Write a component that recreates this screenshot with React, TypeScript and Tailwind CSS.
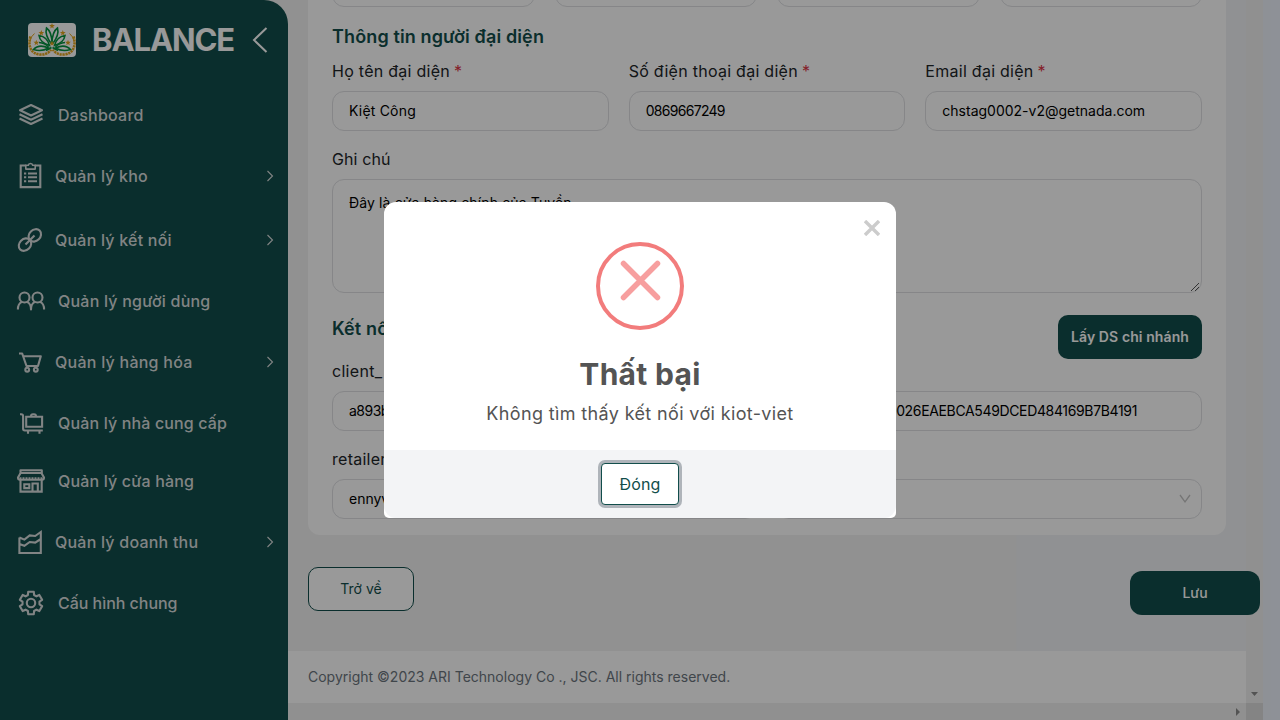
import type { ReactNode } from 'react';

function Icon({ children }: { children: ReactNode }) {
  return (
    <svg
      className="h-[30px] w-[30px] shrink-0"
      viewBox="0 0 30 30"
      fill="none"
      stroke="currentColor"
      strokeWidth="2.1"
      strokeLinejoin="round"
    >
      {children}
    </svg>
  );
}

const gearPoints = Array.from({ length: 6 })
  .flatMap((_, i) =>
    [
      [-21, 8.6],
      [-14, 11.6],
      [14, 11.6],
      [21, 8.6],
    ].map(([offset, r]) => {
      const a = ((i * 60 - 90 + offset) * Math.PI) / 180;
      return `${(15 + r * Math.cos(a)).toFixed(2)},${(15 + r * Math.sin(a)).toFixed(2)}`;
    }),
  )
  .join(' ');

const layers = (
  <Icon>
    <path d="M15 5 26 10.2 15 15.5 4 10.2ZM3.5 14.2 15 19.7l11.5-5.5M3.5 18.5 15 24l11.5-5.5" />
  </Icon>
);
const clipboard = (
  <Icon>
    <path strokeLinejoin="miter" d="M11 4.5H5.7v21.6h19.6V4.5H20" />
    <path d="M10.8 4.3h2.5q.2-1.8 2.2-1.8t2.2 1.8h2.5v3.8h-9.4Z" strokeWidth="1.6" />
    <path d="M9 12.5h2.2M13 12.5h9M9 16.3h2.2M13 16.3h9M9 20.2h2.2M13 20.2h9" />
  </Icon>
);
const link = (
  <Icon>
    <ellipse cx="19.8" cy="10.4" rx="6.8" ry="5.6" transform="rotate(-45 19.8 10.4)" />
    <ellipse cx="10" cy="19.6" rx="6.8" ry="5.6" transform="rotate(-45 10 19.6)" />
    <path d="m10.5 19.5 9-9" />
  </Icon>
);
const users = (
  <Icon>
    <circle cx="8.5" cy="11.5" r="5" />
    <circle cx="21.5" cy="11.5" r="5" />
    <path d="M1.9 23.5c0-4 1.4-6.5 4-7.600M11 15.900c2.600 1.100 4 3.600 4 7.600 0-4 1.400-6.500 4-7.600M24.100 15.900c2.600 1.100 4 3.600 4 7.600" />
  </Icon>
);
const cart = (
  <Icon>
    <path d="M4 6.5h3.2L11.5 19H23l2.8-9.7H8.2" />
    <circle cx="12.2" cy="22.7" r="1.9" />
    <circle cx="20.8" cy="22.7" r="1.9" />
  </Icon>
);
const luggage = (
  <Icon>
    <path d="M4 6.3h1.2q1.9 0 1.9 1.9v12.6q0 1.7 1.7 1.7h18" />
    <path d="M10.2 8.7h15.900v10H10.200Z" strokeLinejoin="miter" />
    <path d="M15 8.5q0-2.2 2-2.2h1q2 0 2 2.2M12 23v2.8M23.5 23v2.8" />
  </Icon>
);
const store = (
  <Icon>
    <path d="M4.500 7.500V4.300h21.300v3.200M4.500 7h21.300M4.300 7.500 2 11.500q0 2.200 2 2.200h22q2 0 2-2.200l-2.300-4" />
    <path d="M3.500 12.600h23" strokeWidth="2.6" strokeDasharray="2 1" />
    <path d="M4.500 14v11.600h12V17.500h5.300v8.100h3.900V14M21.800 25.600h-5.300M8.300 18.200h5v3.900h-5Z" strokeLinejoin="miter" />
  </Icon>
);
const chart = (
  <Icon>
    <path
      strokeLinejoin="miter"
      d="M4.400 10.500V26h21.400V5l-5.600 4-5.500-.6-5.300 4.200-5-2.100M4.400 17l5 1.800 5.300-3.800 5.500.6 5.600-3.600"
    />
  </Icon>
);
const gear = (
  <Icon>
    <polygon points={gearPoints} />
    <circle cx="15" cy="15" r="4.2" />
  </Icon>
);

const menu = [
  { label: 'Dashboard', icon: layers, group: false, tracking: 'tracking-[0.25px]' },
  { label: 'Quản lý kho', icon: clipboard, group: true, tracking: 'tracking-[0.2px]' },
  { label: 'Quản lý kết nối', icon: link, group: true, tracking: 'tracking-[0.22px]' },
  { label: 'Quản lý người dùng', icon: users, group: false, tracking: 'tracking-[0.22px]' },
  { label: 'Quản lý hàng hóa', icon: cart, group: true, tracking: 'tracking-[0.25px]' },
  { label: 'Quản lý nhà cung cấp', icon: luggage, group: false, tracking: 'tracking-[0.15px]' },
  { label: 'Quản lý cửa hàng', icon: store, group: false, tracking: 'tracking-[0.16px]' },
  { label: 'Quản lý doanh thu', icon: chart, group: true, tracking: 'tracking-[0.22px]' },
  { label: 'Cấu hình chung', icon: gear, group: false, tracking: 'tracking-[-0.03px]' },
];

const starAt = (x: number, y: number, s: number) =>
  Array.from({ length: 10 })
    .map((_, i) => {
      const r = i % 2 ? s * 0.42 : s;
      const a = ((i * 36 - 90) * Math.PI) / 180;
      return `${(x + r * Math.cos(a)).toFixed(2)},${(y + r * Math.sin(a)).toFixed(2)}`;
    })
    .join(' ');

function Logo() {
  return (
    <svg className="h-[34px] w-12 shrink-0 rounded-[4px] bg-white" viewBox="0 0 48 34">
      <g fill="none" stroke="#e3a51d" strokeWidth="2.6" strokeDasharray="2.2 .7">
        <path d="M2.500 13.500C-.5 23 3 31 12 31.500c5 .3 9-1.500 11-5" />
        <path d="M45.500 13.500c3 9.500-.5 17.500-9.500 18-5 .3-9-1.500-11-5" />
      </g>
      <path d="M6.500 10.500q-4 3-4.500 8M41.500 10.500q4 3 4.500 8" stroke="#e3a51d" strokeWidth="1" fill="none" />
      <g fill="none" stroke="#05913f" strokeWidth="1.6">
        <path d="M23.500 21Q16.500 12 18.500 5q5.500 4 5.500 15.500Q24 9 29.500 5q2 7-5 16" />
        <path d="M21.500 22.500Q12 19.500 11 12.500q8.500 1.500 10.500 10ZM26.500 22.500q9.500-3 10.500-10-8.500 1.500-10.500 10Z" />
        <path d="M20.500 25Q11 20.500 5.500 26.500q8 2.500 15-1.500ZM27.500 25Q37 20.500 42.500 26.500q-8 2.500-15-1.500Z" />
        <path d="M11 19.500q6 .5 9.500 4.500M37 19.500q-6 .5-9.500 4.500M18 27.500l5.500-3M30 27.500l-5.500-3" />
      </g>
      <g fill="#e3a51d">
        <polygon points={starAt(24, 3, 3)} />
        <polygon points={starAt(13.3, 10, 3)} />
        <polygon points={starAt(34.8, 10, 3)} />
        <polygon points={starAt(8.3, 19.8, 3)} />
        <polygon points={starAt(40, 19.8, 3)} />
        <polygon points={starAt(24, 20.5, 2.8)} />
      </g>
    </svg>
  );
}

function Sidebar() {
  return (
    <aside className="h-[720px] w-[288px] shrink-0 rounded-tr-[24px] bg-[#124e4b]">
      <div className="flex h-[86px] items-start pl-7">
        <div className="flex h-20 items-center">
          <Logo />
          <span className="ml-4 w-[157px] whitespace-nowrap pt-px text-[31px] font-bold tracking-[-1.1px] text-white">
            BALANCE
          </span>
          <svg className="h-7 w-5" viewBox="0 0 20 28" fill="none" stroke="white" strokeWidth="2">
            <path d="M17.500 2 5 14l12.500 12" />
          </svg>
        </div>
      </div>
      <nav className="text-[16px] font-medium text-[#d8dcdd]">
        {menu.map((m) => (
          <div
            key={m.label}
            className={m.group ? 'flex h-16 items-center gap-[10px] pl-[15px] pr-3' : 'flex h-[58px] items-center gap-3 pl-4'}
          >
            {m.icon}
            <span className={`grow whitespace-nowrap ${m.tracking}`}>{m.label}</span>
            {m.group && (
              <svg className="h-3 w-3" viewBox="0 0 12 12" fill="none" stroke="currentColor" strokeWidth="1.1">
                <path d="m3.500 1 5 5-5 5" />
              </svg>
            )}
          </div>
        ))}
      </nav>
    </aside>
  );
}

function Label({ children, required }: { children?: ReactNode; required?: boolean }) {
  return (
    <div className="flex h-10 items-center whitespace-nowrap text-[16px] tracking-[0.27px] text-[#212529]">
      {children}
      {required && <span className="ml-1 text-[#dc3545]">*</span>}
    </div>
  );
}

function Field({ children, className = 'px-4' }: { children?: ReactNode; className?: string }) {
  return (
    <div className={`flex h-10 items-center rounded-[12px] border border-[#dfe0e3] pb-0.5 text-[14px] text-black ${className}`}>
      {children}
    </div>
  );
}

function StoreForm() {
  return (
    <section className="mx-5 -mt-[33px] rounded-[12px] bg-white px-6 pb-4">
      <div className="grid grid-cols-4 gap-5">
        <Field />
        <Field />
        <Field />
        <Field />
      </div>
      <h2 className="mt-4 flex h-7 items-center pb-0.5 text-[18px] font-semibold tracking-[0.13px] text-[#124e4b]">
        Thông tin người đại diện
      </h2>
      <div className="grid grid-cols-3 gap-5">
        <div>
          <Label required>Họ tên đại diện</Label>
          <Field>
            <span className="tracking-[0.2px]">Kiệt Công</span>
          </Field>
        </div>
        <div>
          <Label required>Số điện thoại đại diện</Label>
          <Field>
            <span className="tracking-[-0.7px]">0869667249</span>
          </Field>
        </div>
        <div>
          <Label required>Email đại diện</Label>
          <Field>chstag0002-v2@getnada.com</Field>
        </div>
      </div>
      <div className="mt-2">
        <Label>
          <span className="tracking-[0.1px]">Ghi chú</span>
        </Label>
      </div>
      <div className="flex h-[114px] items-start justify-between rounded-[12px] border border-[#dfe0e3] pl-4 pt-3 text-[14px] leading-[22px] tracking-[0.13px] text-black">
        Đây là cửa hàng chính của Tuyền
        <svg className="h-2.5 w-2.5 self-end" viewBox="0 0 10 10" stroke="#555" strokeWidth="1">
          <path d="m0 9 8-8M4 9l4-4" />
        </svg>
      </div>
      <div className="mt-[22px] flex h-9 justify-between">
        <h2 className="flex h-7 items-center pb-0.5 text-[18px] font-semibold tracking-[0.13px] text-[#124e4b]">
          Kết nối kiot-viet
        </h2>
        <button className="flex h-11 w-36 items-center justify-center whitespace-nowrap rounded-[10px] bg-[#124e4b] pb-0.5 text-[14px] font-semibold tracking-[0.1px] text-white">
          Lấy DS chi nhánh
        </button>
      </div>
      <div className="grid grid-cols-2 gap-x-5 gap-y-2">
        <div>
          <Label>
            <span className="tracking-[0.3px]">client</span>
            <span className="tracking-[3px]">_id</span>
          </Label>
          <Field>
            <span className="tracking-[-0.5px]">a893b6c0-27fd</span>
          </Field>
        </div>
        <div>
          <Label />
          <Field className="justify-end pr-[64px]">
            <span className="whitespace-nowrap tracking-[-0.35px]">1D026EAEBCA549DCED484169B7B4191</span>
          </Field>
        </div>
        <div>
          <Label>retailer</Label>
          <Field>ennyvn</Field>
        </div>
        <div>
          <Label />
          <Field className="justify-end pr-[10px]">
            <svg className="mt-0.5 h-3 w-3" viewBox="0 0 12 12" fill="none" stroke="#c4c4c4" strokeWidth="1.3">
              <path d="m1 2 5 7 5-7" />
            </svg>
          </Field>
        </div>
      </div>
    </section>
  );
}

function ErrorDialog() {
  return (
    <div className="relative flex h-[316px] w-[512px] flex-col items-center rounded-t-[12px] rounded-b-[5px] bg-white text-[#545454]">
      <svg className="absolute right-4 top-[18px] h-4 w-4" viewBox="0 0 16 16" stroke="#ccc" strokeWidth="3.4">
        <path d="m1 1 14 14M15 1 1 15" />
      </svg>
      <svg className="mt-10 h-[88px] w-[88px]" viewBox="0 0 88 88" fill="none">
        <circle cx="44" cy="44" r="42" stroke="#f27c7c" strokeWidth="4" />
        <path d="m27.500 21.500 34 34M61.500 21.500l-34 34" stroke="#f79f9f" strokeWidth="5.5" strokeLinecap="round" />
      </svg>
      <h1 className="mt-6 h-10 text-[30px] font-bold leading-10 tracking-[0.3px]">Thất bại</h1>
      <p className="mt-[7px] h-[26px] whitespace-nowrap text-[18px] leading-[26px] tracking-[0.36px]">
        Không tìm thấy kết nối với kiot-viet
      </p>
      <div className="mt-[23px] flex h-[68px] w-full items-center justify-center rounded-b-[12px] bg-[#f3f4f6]">
        <button className="h-[42px] w-[78px] rounded-[4px] border border-[#124e4b] bg-white text-[16px] tracking-[0.2px] text-[#124e4b] ring-3 ring-[#afb4ba]">
          Đóng
        </button>
      </div>
    </div>
  );
}

export default function App() {
  return (
    <div className="relative h-[720px] w-[1280px] overflow-hidden bg-[#f2f2f2] font-['Inter',sans-serif]">
      <div className="flex h-full">
        <Sidebar />
        <div className="flex w-[958px] shrink-0 flex-col">
          <main className="h-[651px] bg-[linear-gradient(90deg,#f2f2f2_728px,#f0f2f5_729px)]">
            <div className="flow-root overflow-hidden">
              <StoreForm />
            </div>
            <button className="ml-5 mt-8 h-11 w-[106px] rounded-[10px] border border-[#124e4b] bg-white pb-0.5 text-[14px] text-[#124e4b]">
              Trở về
            </button>
          </main>
          <footer className="flex h-[52px] items-center bg-white pb-0.5 pl-5 text-[14px] text-[#6c757d]">
            Copyright ©2023 ARI Technology Co ., JSC. All rights reserved.
          </footer>
          <div className="flex h-[17px] items-center justify-end bg-[#f1f1f1] pr-[6px]">
            <svg className="h-2 w-1" viewBox="0 0 4 8" fill="#8b8b8b">
              <path d="M0 0v8l4-4Z" />
            </svg>
          </div>
        </div>
        <div className="flex w-[17px] flex-col bg-[#f1f1f1]">
          <div className="flex h-[703px] items-end justify-center pb-[7px]">
            <svg className="h-1 w-[7px]" viewBox="0 0 7 4" fill="#8b8b8b">
              <path d="M0 0h7L3.500 4Z" />
            </svg>
          </div>
          <div className="h-[17px] bg-[#dcdcdc]" />
        </div>
        <div className="w-[17px] bg-[#edf2fb]" />
      </div>
      <button className="absolute bottom-[105px] right-5 h-11 w-[130px] rounded-[12px] bg-[#124e4b] pb-0.5 text-[14px] font-medium text-white">
        Lưu
      </button>
      <div className="absolute inset-0 bg-black/40" />
      <div className="absolute inset-0 flex items-center justify-center">
        <ErrorDialog />
      </div>
    </div>
  );
}
